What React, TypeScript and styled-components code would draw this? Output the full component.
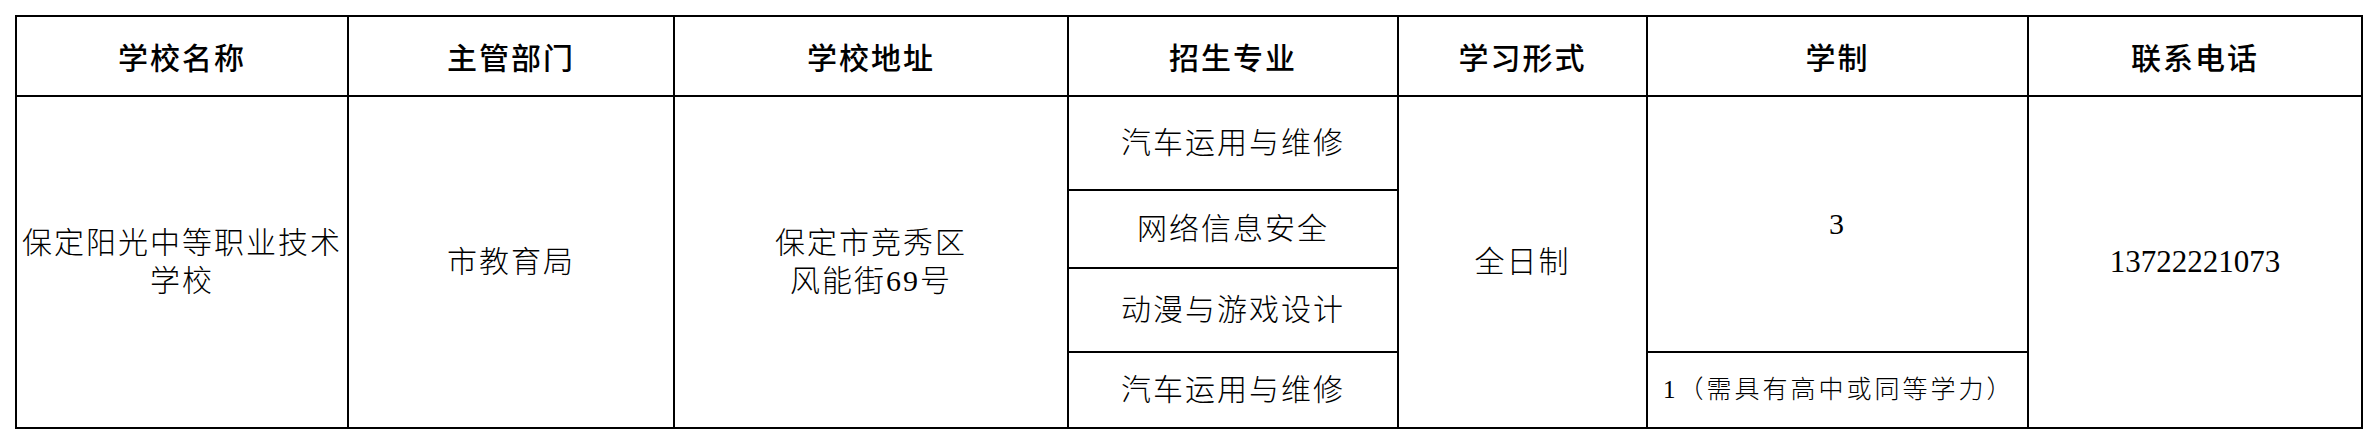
import React from "react";
import styled, { createGlobalStyle } from "styled-components";

const GlobalStyle = createGlobalStyle`
  html, body {
    margin: 0;
    padding: 0;
    background: #ffffff;
  }
  body {
    font-family: "Liberation Serif", "Noto Sans CJK SC", serif;
    color: #000000;
  }
`;

const Page = styled.div`
  padding: 15px;
`;

const Table = styled.table`
  width: 2346px;
  border-collapse: collapse;
  table-layout: fixed;
  border: 2px solid #000;
`;

const HeadCell = styled.th`
  height: 78px;
  padding: 0 3px;
  border: 2px solid #000;
  font-size: 30px;
  font-weight: 500;
  letter-spacing: 2px;
  text-align: center;
  vertical-align: middle;
`;

const Cell = styled.td<{ $h?: number; $left?: boolean; $small?: boolean }>`
  height: ${(p) => (p.$h ? `${p.$h}px` : "auto")};
  padding: ${(p) => (p.$left ? "0 0 0 15px" : "0 3px")};
  border: 2px solid #000;
  font-size: ${(p) => (p.$small ? "25px" : "30px")};
  font-weight: 300;
  letter-spacing: ${(p) => (p.$small ? "3px" : "2px")};
  line-height: 38px;
  text-align: ${(p) => (p.$left ? "left" : "center")};
  vertical-align: middle;
`;

const Phone = styled.span`
  font-size: 31px;
  letter-spacing: 0;
`;

const widths = [332, 326, 394, 330, 249, 381, 334];
const heads = ["学校名称", "主管部门", "学校地址", "招生专业", "学习形式", "学制", "联系电话"];
const majors = [
  { name: "汽车运用与维修", h: 92 },
  { name: "网络信息安全", h: 76 },
  { name: "动漫与游戏设计", h: 82 },
  { name: "汽车运用与维修", h: 74 },
];

export default function App() {
  return (
    <>
      <GlobalStyle />
      <Page>
        <Table>
          <colgroup>
            {widths.map((w, i) => (
              <col key={i} style={{ width: w }} />
            ))}
          </colgroup>
          <thead>
            <tr>
              {heads.map((h) => (
                <HeadCell key={h}>{h}</HeadCell>
              ))}
            </tr>
          </thead>
          <tbody>
            <tr>
              <Cell rowSpan={4}>保定阳光中等职业技术学校</Cell>
              <Cell rowSpan={4}>市教育局</Cell>
              <Cell rowSpan={4}>
                保定市竞秀区
                <br />
                风能街69号
              </Cell>
              <Cell $h={majors[0].h}>{majors[0].name}</Cell>
              <Cell rowSpan={4}>全日制</Cell>
              <Cell rowSpan={3}>3</Cell>
              <Cell rowSpan={4}>
                <Phone>13722221073</Phone>
              </Cell>
            </tr>
            <tr>
              <Cell $h={majors[1].h}>{majors[1].name}</Cell>
            </tr>
            <tr>
              <Cell $h={majors[2].h}>{majors[2].name}</Cell>
            </tr>
            <tr>
              <Cell $h={majors[3].h}>{majors[3].name}</Cell>
              <Cell $left $small>
                1（需具有高中或同等学力）
              </Cell>
            </tr>
          </tbody>
        </Table>
      </Page>
    </>
  );
}
